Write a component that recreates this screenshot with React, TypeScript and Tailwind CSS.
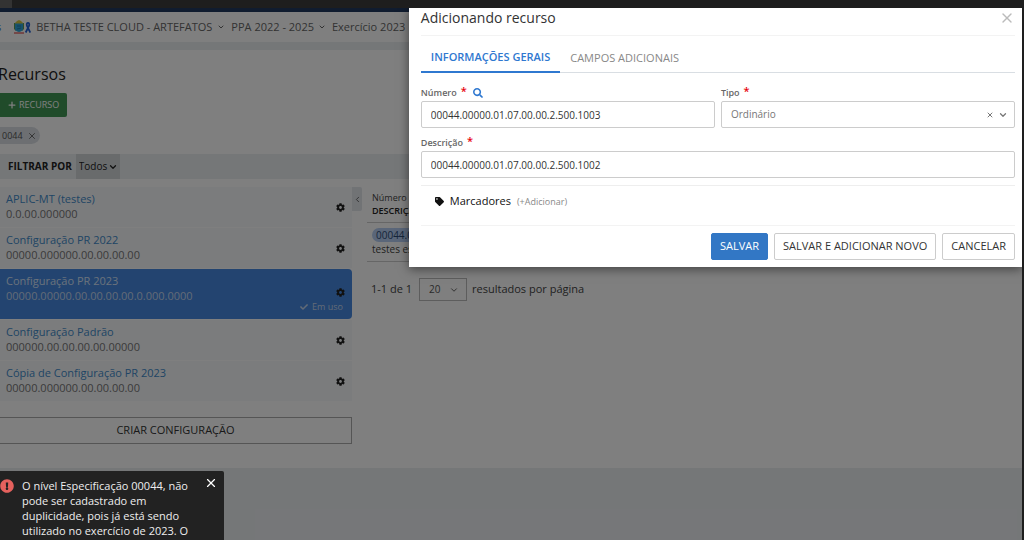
import { ChevronDown, ChevronLeft, Plus, X } from 'lucide-react'
import { FaCheck, FaCog, FaExclamationCircle, FaSearch, FaTag } from 'react-icons/fa'

type Config = {
  name: string
  mask: string
  active?: boolean
}

const configs: Config[] = [
  { name: 'APLIC-MT (testes)', mask: '0.0.00.000000' },
  { name: 'Configuração PR 2022', mask: '00000.000000.00.00.00.00' },
  { name: 'Configuração PR 2023', mask: '00000.00000.00.00.00.00.0.000.0000', active: true },
  { name: 'Configuração Padrão', mask: '000000.00.00.00.00.00000' },
  { name: 'Cópia de Configuração PR 2023', mask: '00000.000000.00.00.00.00' },
]

const Crest = () => (
  <svg viewBox="0 0 18 14" className="w-[18px] h-[14px]" aria-hidden="true">
    <path d="M1 3 L3 3 L3 11 L1 9Z M9 3 L11 3 L11 9 L9 11Z" fill="#5f9a50" />
    <path d="M2 3 L4 1 L6 0 L8 1 L10 3 L10 4 L2 4Z" fill="#d8c840" />
    <path d="M2 3.5 H10 V9 Q10 11 6 12 Q2 11 2 9Z" fill="#2fa5d8" />
    <path d="M4 6 H8 M4 9 L8 8" stroke="#1f7fae" strokeWidth="1" />
    <path d="M1 13 H11" stroke="#d84848" strokeWidth="1.2" fill="none" />
    <path d="M12.700 12.500 L16 6 Q16.800 3 15 3 Q13.200 3 14 6 L17.300 12.500" stroke="#2463d4" strokeWidth="1.8" fill="none" />
  </svg>
)

const Header = () => (
  <header className="border-t-4 border-[#20385f] bg-white">
    <nav className="flex items-center h-[30px] text-[11px] text-[#666]">
      <a href="#" className="-ml-1 mr-3 text-[#337ac7]">s</a>
      <a href="#" className="flex items-center gap-x-[5px] mr-1.5">
        <Crest />
        BETHA TESTE CLOUD - ARTEFATOS
        <ChevronDown size={8} strokeWidth={3} />
      </a>
      <a href="#" className="flex items-center gap-x-1 mr-1.5">
        PPA 2022 - 2025
        <ChevronDown size={8} strokeWidth={3} />
      </a>
      <a href="#">Exercício 2023</a>
    </nav>
  </header>
)

const ConfigItem = ({ name, mask, active }: Config) => (
  <li
    className={
      active
        ? 'flex items-center h-[50px] pl-1.5 pr-[7px] rounded-r-sm bg-[#4688e0] text-[#c4d6ee]'
        : 'flex items-center h-10 pl-1.5 pr-[7px] bg-[#f7f9fb] text-[#777]'
    }
  >
    <div className="flex-1 self-start pt-1 text-[11px] leading-[15px]">
      <a href="#" className={active ? 'block text-[#d5e4f8]' : 'block text-[#428bca]'}>
        {name}
      </a>
      <div>{mask}</div>
    </div>
    {active ? (
      <div className="flex flex-col items-end gap-y-1 self-end pb-1.5">
        <button type="button" aria-label="Opções" className="text-[#222]">
          <FaCog size={9} />
        </button>
        <span className="flex items-center gap-x-1 mr-0.5 text-[9px] leading-3">
          <FaCheck size={8} />
          Em uso
        </span>
      </div>
    ) : (
      <button type="button" aria-label="Opções" className="text-[#222]">
        <FaCog size={9} />
      </button>
    )}
  </li>
)

const Sidebar = () => (
  <aside className="w-[352px] shrink-0">
    <ul className="flex flex-col gap-y-px">
      {configs.map((config) => (
        <ConfigItem key={config.name} {...config} />
      ))}
    </ul>
    <button type="button" className="w-full h-[27px] mt-4 border border-l-0 border-[#aaa] text-[11px] text-[#333]">
      CRIAR CONFIGURAÇÃO
    </button>
  </aside>
)

const Results = () => (
  <section className="flex-1 pl-[5px]">
    <table className="w-full text-[#444]">
      <thead>
        <tr className="border-b border-[#ccc]">
          <th className="h-[35px] pl-[5px] text-left text-[9px] leading-[13px] font-normal">
            Número
            <div className="font-semibold text-[#222]">DESCRIÇÃO</div>
          </th>
        </tr>
      </thead>
      <tbody>
        <tr className="border-b border-[#ccc]">
          <td className="h-[39px] pl-[5px] text-[10px] leading-[14px]">
            <span className="inline-block px-1 rounded-full bg-[#b4cdf2] text-[#2c4a75]">
              00044.00000.01.07.00.00.2.500.1002
            </span>
            <div>testes especificação</div>
          </td>
        </tr>
      </tbody>
    </table>
    <div className="flex items-center gap-x-[5px] mt-4 pl-1 text-[11px] text-[#444]">
      <span>1-1 de 1</span>
      <span className="relative ml-0.5">
        <select aria-label="Resultados por página" className="appearance-none w-12 h-[23px] pl-[9px] border border-[#bbb] text-[10px] text-[#555]">
          <option>20</option>
        </select>
        <ChevronDown size={10} className="absolute right-2 top-[7px] pointer-events-none" />
      </span>
      <span>resultados por página</span>
    </div>
  </section>
)

const Required = () => <span className="ml-1 pb-1.5 text-[11px] leading-none text-red-600">*</span>

const Modal = () => (
  <div
    role="dialog"
    aria-labelledby="modal-title"
    className="absolute top-0 right-0 w-3/5 pl-3 pr-[7px] pb-[7px] bg-white shadow-[0_2px_10px_rgba(0,0,0,0.5)]"
  >
    <div className="flex items-start justify-between h-7 border-b border-[#f3f3f3]">
      <h2 id="modal-title" className="text-sm leading-5 text-[#333]">Adicionando recurso</h2>
      <button type="button" aria-label="Fechar" className="pt-0.5 text-[#bbb]">
        <X size={16} />
      </button>
    </div>
    <div role="tablist" className="flex h-[37px] pt-2 border-b border-[#d9dee3] text-[11px]">
      <button type="button" role="tab" aria-selected="true" className="h-[29px] px-[10px] border-b-2 border-[#2f78d0] font-semibold text-[#2f78d0]">
        INFORMAÇÕES GERAIS
      </button>
      <button type="button" role="tab" aria-selected="false" className="h-[29px] px-[10px] text-[#888]">
        CAMPOS ADICIONAIS
      </button>
    </div>
    <form className="text-[11px] text-[#333]">
      <div className="grid grid-cols-2 gap-x-1.5 pt-3">
        <div>
          <div className="flex items-center h-4">
            <label htmlFor="numero" className="flex items-center text-[9px] font-semibold text-[#666]">
              Número
              <Required />
            </label>
            <button type="button" aria-label="Pesquisar" className="ml-1.5 text-[#2f78d0]">
              <FaSearch size={10} />
            </button>
          </div>
          <input id="numero" defaultValue="00044.00000.01.07.00.00.2.500.1003" className="block w-full h-[27px] px-[9px] border border-[#ccc] rounded-xs text-[10px]" />
        </div>
        <div>
          <div className="flex items-center h-4">
            <label htmlFor="tipo" className="flex items-center text-[9px] font-semibold text-[#666]">
              Tipo
              <Required />
            </label>
          </div>
          <div className="relative">
            <select id="tipo" className="block appearance-none w-full h-[27px] px-[9px] border border-[#ccc] rounded-xs text-[10px] text-[#777]">
              <option>Ordinário</option>
            </select>
            <div className="absolute inset-y-0 right-[7px] flex items-center gap-x-1 text-[#777]">
              <button type="button" aria-label="Limpar tipo">
                <X size={8} strokeWidth={3} />
              </button>
              <ChevronDown size={10} strokeWidth={3} className="pointer-events-none" />
            </div>
          </div>
        </div>
      </div>
      <div className="pt-[7px]">
        <div className="flex items-center h-4">
          <label htmlFor="descricao" className="flex items-center text-[9px] font-semibold text-[#666]">
            Descrição
            <Required />
          </label>
        </div>
        <input id="descricao" defaultValue="00044.00000.01.07.00.00.2.500.1002" className="block w-full h-[27px] px-[9px] border border-[#ccc] rounded-xs text-[10px]" />
      </div>
      <div className="flex items-center h-10 mt-[7px] pl-3.5 pb-2 border-t border-[#eee] text-[#111]">
        <FaTag size={9} />
        <span className="ml-1.5">Marcadores</span>
        <a href="#" className="ml-1.5 text-[9px] text-[#888]">(+Adicionar)</a>
      </div>
      <div className="flex justify-end gap-x-1.5 pt-[7px] border-t border-[#f3f3f3]">
        <button type="button" className="h-[27px] px-2 border border-[#3277c5] rounded-xs bg-[#3277c5] text-white">SALVAR</button>
        <button type="button" className="h-[27px] px-2 border border-[#ccc] rounded-xs">SALVAR E ADICIONAR NOVO</button>
        <button type="button" className="h-[27px] px-2 border border-[#ccc] rounded-xs">CANCELAR</button>
      </div>
    </form>
  </div>
)

const Toast = () => (
  <div role="alert" className="absolute left-0 bottom-0 flex w-[224px] h-[69px] overflow-hidden rounded-tr-xs bg-[#222] pt-[7px] pr-1.5 text-white">
    <FaExclamationCircle size={14} className="shrink-0 mt-px text-[#e5615d]" />
    <p className="flex-1 ml-2 text-[11px] leading-[15px] text-[#eee]">
      O nível Especificação 00044, não
      <br />
      pode ser cadastrado em
      <br />
      duplicidade, pois já está sendo
      <br />
      utilizado no exercício de 2023. O
    </p>
    <button type="button" aria-label="Fechar aviso" className="self-start -mt-0.5">
      <X size={14} />
    </button>
  </div>
)

const App = () => {
  return (
    <div className="flex flex-col h-screen overflow-hidden bg-[#1e1e1e] font-['Open_Sans',sans-serif]">
      <div className="h-2 shrink-0">
        <div className="w-3 h-full bg-[#333]" />
      </div>
      <div className="relative flex-1 mr-0.5 overflow-hidden bg-[#ebeef1]">
        <Header />
        <main className="mt-2 pb-6 bg-white">
          <h1 className="-ml-0.5 pt-3 text-base leading-6 text-[#222]">Recursos</h1>
          <button type="button" className="flex items-center gap-x-0.5 h-6 mt-[7px] pl-[7px] pr-2 rounded-r-xs bg-[#409754] text-[9px] text-white">
            <Plus size={10} strokeWidth={3} />
            RECURSO
          </button>
          <div className="flex mt-[10px]">
            <span className="flex items-center gap-x-1 h-[17px] pl-0.5 pr-[3px] rounded-r-full bg-[#dadfe4] text-[9px] text-[#555]">
              0044
              <button type="button" aria-label="Remover filtro">
                <X size={10} strokeWidth={2} />
              </button>
            </span>
          </div>
          <div className="flex items-center h-[25px] mt-[10px] pl-2 bg-[#ebeef1] text-[#222]">
            <label htmlFor="filtro" className="text-[10px] font-bold">FILTRAR POR</label>
            <span className="relative ml-1">
              <select id="filtro" className="block appearance-none w-11 h-[25px] pl-[3px] bg-[#d3d6d9] text-[10px]">
                <option>Todos</option>
              </select>
              <ChevronDown size={10} strokeWidth={3} className="absolute right-0.5 top-2 pointer-events-none" />
            </span>
          </div>
          <div className="flex mt-2">
            <Sidebar />
            <button type="button" aria-label="Recolher" className="flex items-center justify-center w-[10px] h-6 rounded-r-xs bg-[#e2e6eb] text-[#444]">
              <ChevronLeft size={9} strokeWidth={2} />
            </button>
            <Results />
          </div>
        </main>
        <div className="absolute inset-0 bg-black/50" />
        <Modal />
        <Toast />
      </div>
    </div>
  )
}

export default App
